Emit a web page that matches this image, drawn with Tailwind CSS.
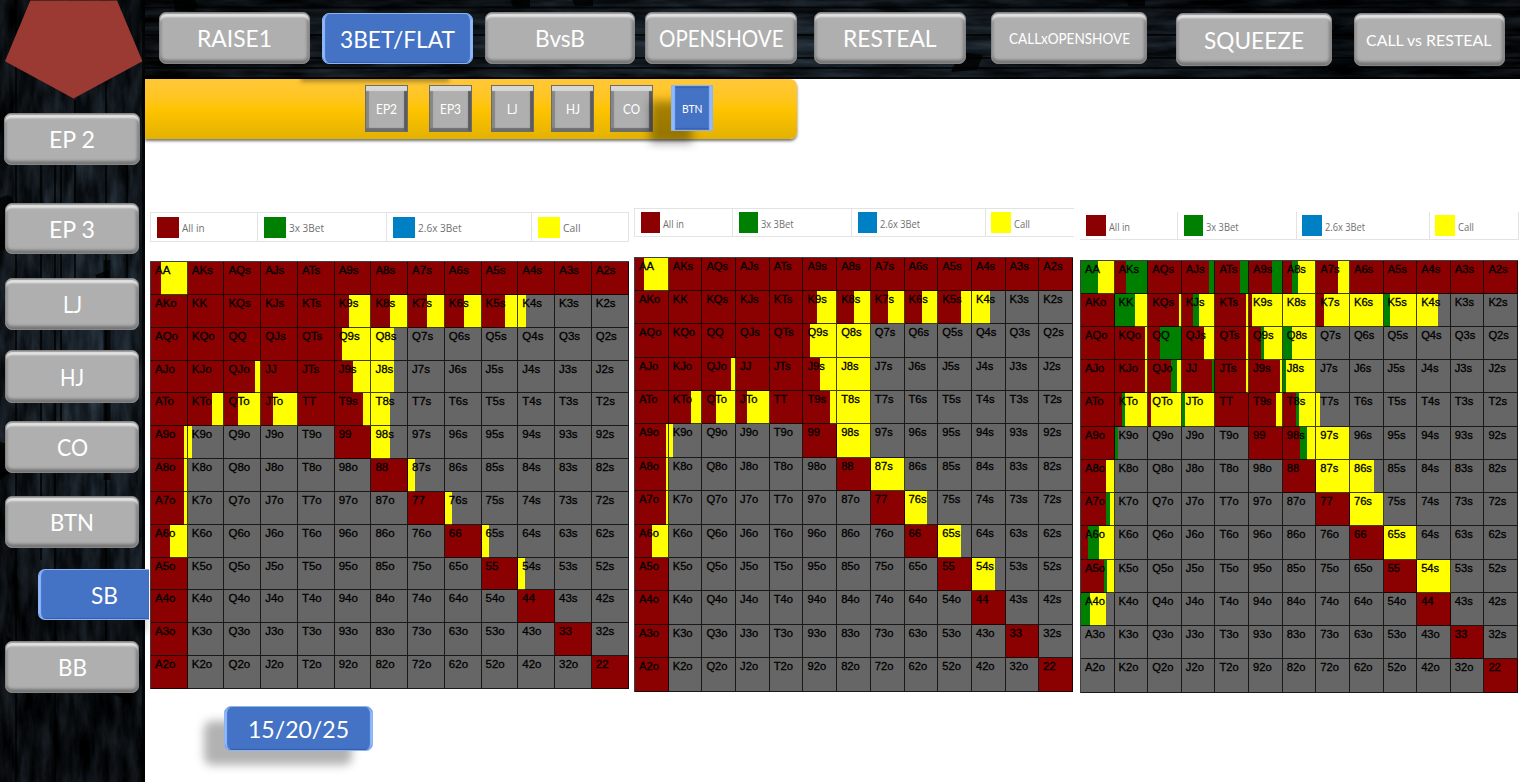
<!DOCTYPE html>
<html lang="en">
<head>
<meta charset="utf-8">
<title>Preflop ranges</title>
<script src="https://cdn.jsdelivr.net/npm/@tailwindcss/browser@4"></script>
</head>
<body class="h-[782px] w-[1520px] overflow-hidden bg-white font-['Lato',sans-serif] text-white">
<div class="flex h-full w-full">

  <aside class="relative z-10 h-full w-[145px] shrink-0 bg-[#070b0f]">
    <svg class="absolute inset-0" width="145" height="782">
      <filter id="woodV" x="0" y="0" width="100%" height="100%" color-interpolation-filters="sRGB">
        <feTurbulence type="fractalNoise" baseFrequency="0.1 0.022" numOctaves="5" seed="11"/>
        <feColorMatrix values="0.22 0 0 0 -0.065  0.26 0 0 0 -0.067  0.3 0 0 0 -0.072  0 0 0 0 1"/>
      </filter>
      <radialGradient id="vigV" gradientUnits="userSpaceOnUse" cx="0" cy="0" r="1" gradientTransform="translate(92 350) scale(110 330)">
        <stop offset="0" stop-color="#5b7690" stop-opacity=".26"/><stop offset=".6" stop-color="#5b7690" stop-opacity=".05"/><stop offset="1" stop-color="#000" stop-opacity=".25"/>
      </radialGradient>
      <rect width="145" height="782" filter="url(#woodV)"/>
      <rect width="145" height="782" fill="url(#vigV)"/>
      <g stroke="#000" stroke-opacity=".75">
        <path d="M16 0V782M41 150V560M55 160V782M61 150V430M75 100V300M106 80V640M127 150V300" stroke-width="2"/>
        <path d="M107 260V480" stroke-width="7"/>
        <path d="M143.500 0V782" stroke-width="3"/>
      </g>
      <path d="M0 198Q14 190 14 206V250H0ZM95 275L109 270V282L98 281ZM0 442L13 445V470L0 480ZM6 635L20 645 40 655V660L8 662ZM108 675L128 680 127 700 108 692Z" fill="#000" fill-opacity=".8"/>
      <path d="M30.300 .5H117L142.500 61.300L73.500 98.500L5 61.300Z" fill="#9a3a33"/>
    </svg>
    <nav id="side" class="relative flex flex-col pt-[113px]"></nav>
  </aside>

  <div class="flex min-w-0 flex-1 flex-col">
    <header class="relative h-[79px] shrink-0 bg-[#070b0f]">
      <svg class="absolute inset-0" width="1375" height="79">
        <filter id="woodH" x="0" y="0" width="100%" height="100%" color-interpolation-filters="sRGB">
          <feTurbulence type="fractalNoise" baseFrequency="0.018 0.12" numOctaves="5" seed="5"/>
          <feColorMatrix values="0 0.22 0 0 -0.065  0 0.26 0 0 -0.067  0 0.3 0 0 -0.072  0 0 0 0 1"/>
        </filter>
        <radialGradient id="vigH" gradientUnits="userSpaceOnUse" cx="0" cy="0" r="1" gradientTransform="translate(620 48) scale(620 60)">
          <stop offset="0" stop-color="#5b7690" stop-opacity=".26"/><stop offset=".6" stop-color="#5b7690" stop-opacity=".05"/><stop offset="1" stop-color="#000" stop-opacity=".25"/>
        </radialGradient>
        <rect width="1375" height="79" filter="url(#woodH)"/>
        <rect width="1375" height="79" fill="url(#vigH)"/>
        <path d="M0 7.500H1375M0 58H1375M0 68H1375M0 78H1375M0 35H1375" stroke="#000" stroke-opacity=".75" stroke-width="2"/>
        <path d="M28 0H50L53 5 50 11H30ZM366 0H385V7H368ZM427 0H448V6H430ZM815 52L838 55 832 70 806 72ZM980 0H1000V6H984ZM1188 24L1200 26 1190 30Z" fill="#000" fill-opacity=".8"/>
      </svg>
      <nav id="top" class="relative flex items-start pt-3"></nav>
    </header>

    <section class="relative h-[60px] w-[652px] shrink-0 rounded-r-[7px] bg-linear-to-b from-[#ffc738] via-[#ffc400] via-50% to-[#e3b100] shadow-[0_2px_3px_rgba(0,0,0,0.55)]">
      <div class="absolute top-0 left-[150px] h-[8px] w-[160px] overflow-hidden"><div class="-mt-[6px] ml-[6px] h-[9px] w-[148px] bg-black/30 blur-[2px]"></div></div>
      <div id="pos" class="relative flex pt-[6px] pl-[220px]"></div>
    </section>

    <main id="charts" class="flex h-[567px] shrink-0 items-start"></main>

    <footer class="flex pl-[79px]">
      <div id="stack" class="relative"></div>
    </footer>
  </div>
</div>

<script>
const GREY = "border border-[#858585] bg-[#afafaf] shadow-[inset_0_1px_1px_#999,inset_0_5px_2px_-1px_#e4e4e4,inset_-3px_0_3px_-1px_#808080,inset_0_-4px_3px_-1px_#747474,inset_2px_0_2px_#999]";
const BLUE = "border border-[#8db4ee] bg-[#4472c4] shadow-[inset_3px_0_1px_-1px_#8fbaff,inset_-3px_0_1px_-1px_#8fbaff,inset_0_-1px_1px_#345fae]";
const SHAPE = "flex shrink-0 items-center justify-center";

/* A one-line label condensed to w pixels; h is the line height, b the baseline. */
const label = (t, w, cls, h, b) =>
  `<svg width="${w}" height="${h}" class="shrink-0 overflow-visible"><text x="0" y="${b}" textLength="${w}" lengthAdjust="spacingAndGlyphs" xml:space="preserve" class="fill-current ${cls}">${t}</text></svg>`;
const big = (t, w) => label(t, w, "text-[23.500px]", 24, 20.5);
const small = (t, w) => label(t, w, "text-[16px]", 18, 14.500);

/* label, text width, box classes, label size, active */
const tabs = [
  ["RAISE1", 75, "ml-[13.500px] w-[151px] h-[52px]", big],
  ["3BET/FLAT", 115, "ml-[12.500px] mt-[1px] w-[151px] h-[51px]", big, 1],
  ["BvsB", 50, "ml-[12px] w-[150px] h-[52px]", big],
  ["OPENSHOVE", 124.5, "ml-[10px] w-[152px] h-[52px]", big],
  ["RESTEAL", 93.5, "ml-[17px] w-[152px] h-[52px]", big],
  ["CALLxOPENSHOVE", 121, "ml-[25px] w-[156px] h-[52px]", small],
  ["SQUEEZE", 100, "ml-[29px] mt-[1px] w-[156px] h-[53px]", big],
  ["CALL vs RESTEAL", 125.5, "ml-[21.500px] mt-[1px] w-[151px] h-[53px]", small],
];
document.getElementById("top").innerHTML = tabs.map(([t, w, b, f, on]) =>
  `<div class="${SHAPE} rounded-[7px] ${b} ${on ? BLUE : GREY}">${f(t, w)}</div>`).join("");

const side = [
  ["EP 2", 46, "ml-1 w-[135.500px] h-[52px]"],
  ["EP 3", 46, "ml-[5px] mt-[38px] w-[134px] h-[51px]"],
  ["LJ", 19, "ml-[5px] mt-[24px] w-[134px] h-[52px]"],
  ["HJ", 24, "ml-[5px] mt-[20px] w-[134px] h-[53px]"],
  ["CO", 31, "ml-[5px] mt-[18px] w-[134px] h-[52px]"],
  ["BTN", 44, "ml-[5px] mt-[23px] w-[134px] h-[52px]"],
  ["SB", 27, "", 1],
  ["BB", 29, "ml-[5px] mt-[21px] w-[134px] h-[52px]"],
];
document.getElementById("side").innerHTML = side.map(([t, w, b, on]) => on
  ? `<div class="${SHAPE} ml-[38px] mt-[21px] h-[51px] w-[111px] rounded-l-[7px] border border-r-0 border-[#8db4ee] bg-[#4472c4] pl-[21px] shadow-[inset_3px_0_1px_-1px_#8fbaff,inset_0_-1px_1px_#345fae,-3px_13px_9px_-1px_rgba(0,0,0,0.3)]">${big(t, w)}</div>`
  : `<div class="${SHAPE} rounded-[7px] ${b} ${GREY}">${big(t, w)}</div>`).join("");

const SG = "border border-[#6c6c6c] bg-[#afafaf] shadow-[inset_0_6px_1px_-1px_#d8d8d8,inset_-4px_0_1px_-1px_#5c5c5c,inset_0_-4px_1px_-1px_#6e6e6e,inset_4px_0_1px_-1px_#868686]";
const pos = [
  ["EP2", 21, "w-[43px]"], ["EP3", 21, "ml-[21px] w-[43px]"], ["LJ", 10.5, "ml-[19px] w-[43px]"],
  ["HJ", 14, "ml-[17px] w-[43px]"], ["CO", 17, "ml-4 w-[43px]"],
];
document.getElementById("pos").innerHTML = pos.map(([t, w, b]) =>
  `<div class="${SHAPE} h-[47px] ${b} ${SG}">${label(t, w, "text-[13px]", 14, 11.500)}</div>`).join("") +
  `<div class="relative ml-[18px]"><div class="absolute top-[16px] -left-[21px] h-[42px] w-[42px] bg-black/35 blur-[5px]"></div>
   <div class="${SHAPE} relative h-[46px] w-[42px] border border-[#8db4ee] bg-[#4472c4] shadow-[inset_3px_0_1px_#8fbaff,inset_-3px_0_1px_#8fbaff,inset_0_3px_1px_-1px_#3763b4,inset_0_-3px_1px_-1px_#3763b4]">${label("BTN", 20.5, "text-[11.500px]", 12, 10.500)}</div></div>`;

document.getElementById("stack").innerHTML =
  `<div class="absolute top-[15px] -left-[20px] h-[44px] w-[148px] rounded-lg bg-black/30 blur-[5px]"></div>
   <div class="${SHAPE} relative h-[45px] w-[149px] rounded-[7px] ${BLUE}">${label("15/20/25", 101, "text-[22.500px]", 24, 20.5)}</div>`;

/* Range charts. Each cell: colour code + end percentage; whatever remains is fold. */
const COL = { r: "#8b0000", g: "#008000", y: "#ffff00", f: "#666666" };
const RANKS = "AKQJT98765432";
const parse = s => Object.fromEntries(s.trim().split(/\s+/).map(e => { const [k, v] = e.split(":"); return [k, v || "r100"]; }));
const PAIRS = "TT 99 88 77 66 55 44 33 22 ";
const CORE = PAIRS + "AKs AQs AJs ATs A9s A8s A7s A6s A5s A4s A3s A2s AKo AQo AJo ATo A5o A4o A3o A2o KK KQs KJs KTs KQo QQ QJs QTs KJo JJ JTs ";
const charts = [
  { box: "mt-[72px] ml-[5px] w-[479px]", grid: "mt-[19px] h-[428px] w-[478.500px] text-[11.500px]",
    lg: "h-[31px] w-[479px] pt-[1px]", line: "border-y",
    it: [["w-[107px] pl-[6px]", 22.5], ["w-[129px] pl-[6px]", 35], ["w-[145px] pl-[6px]", 43.5], ["w-[98px] pl-[6px]", 17.500]], sw: "w-[21.500px]",
    d: CORE + "AA:r27,y100 A9o:r90,y100 A8o:r90,y100 A7o:r90,y100 A6o:r52,y100 K9s:r39,y100 K8s:r51,y100 K7s:r50,y100 K6s:r51,y100 K5s:r65,y100 K4s:y21 Q9s:r20,y100 Q8s:y61 QJo:r84,y100 J9s:r50,y100 J8s:y61 KTo:r66,y100 QTo:r39,y100 JTo:r33,y100 T9s:r79,y100 T8s:y51 K9o:y11 98s:y51 87s:y20 76s:y20 65s:y20 54s:y20" },
  { box: "mt-[68px] ml-[5px] w-[440px]", grid: "mt-[19.500px] h-[435px] w-[439px] text-[11.200px]",
    lg: "h-[30px] w-[440px] pt-[1px]", line: "border-y",
    it: [["w-[98px] pl-[5.500px]", 21], ["w-[119px] pl-[5.500px]", 32.500], ["w-[133.500px] pl-[5.500px]", 40], ["w-[89.500px] pl-[5.500px] last:border-r-0", 16]], sw: "w-[19.500px]",
    d: CORE + "AA:r27,y100 A9o:r90,y100 A8o:r90,y100 A7o:r90,y100 A6o:r51,y100 K9s:r40,y100 K8s:r51,y100 K7s:r50,y100 K6s:r51,y100 K5s:r67,y100 K4s:y52 Q9s:r21,y100 Q8s:y100 QJo:r84,y100 J9s:r51,y100 J8s:y100 KTo:r66,y100 QTo:r40,y100 JTo:r33,y100 T9s:r80,y100 T8s:y100 K9o:y11 98s:y100 87s:y100 76s:y67 65s:y67 54s:y67" },
  { box: "mt-[73px] ml-[6px] w-[439px]", grid: "mt-[19.500px] h-[433px] w-[438px] text-[11.200px]",
    lg: "h-[28px] w-[439px]", line: "border-b",
    it: [["w-[97px] pl-[6px] border-l-0", 21], ["w-[118.500px] pl-[5.500px]", 32.500], ["w-[133px] pl-[5.500px]", 40], ["w-[90px] pl-[5.500px]", 16]], sw: "w-[19.500px]",
    d: PAIRS + "AA:g51,y100 AKs:r34,g100 AQs AJs:r81,g100 ATs:r75,g100 A9s:r67,g100 A8s:r26,g45,y100 A7s:r66,y100 A6s A5s A4s A3s A2s AKo KK:g60,y100 KQs:r90,y100 KJs:r34,g53,y100 KTs:r91,y100 K9s:r10,y100 K8s:y100 K7s:r25,y100 K6s:y100 K5s:g19,y100 K4s:y62 AQo KQo:r90,y100 QQ:r34,g100 QJs:r66,y100 QTs:r91,y100 Q9s:r34,g44,y100 Q8s:g26,y100 AJo KJo:r90,y100 QJo:r67,g86,y100 JJ:r90,g100 JTs:r91,y100 J9s:r90,y100 J8s:g10,y100 ATo KTo:r22,g30,y100 QTo:r10,y100 JTo:g10,y100 T9s:r80,y100 T8s:r40,g50,y100 T7s:y11 A9o K9o:g10 98s:r51,g74,y100 97s:y100 A8o:r75,y100 87s:y100 86s:y70 A7o:r75,g84,y100 76s:y100 A6o:r20,g53,y100 65s:y100 A5o:r68,g77,y100 54s:y100 A4o:g25,y74" },
];
function fill(spec) {
  let at = 0; const out = [];
  for (const p of (spec || "").split(",").filter(Boolean)) {
    const end = +p.slice(1);
    out.push(`${COL[p[0]]} ${at}% ${end}%`); at = end;
  }
  if (at < 100) out.push(`${COL.f} ${at}% 100%`);
  return `linear-gradient(90deg,${out.join(",")})`;
}
const LEG = [["All in", "bg-[#8b0000]"], ["3x 3Bet", "bg-[#008000]"], ["2.6x 3Bet", "bg-[#0080c4]"], ["Call", "bg-[#ffff00]"]];
document.getElementById("charts").innerHTML = charts.map(c => {
  const m = parse(c.d); let cells = "";
  for (let i = 0; i < 13; i++) for (let j = 0; j < 13; j++) {
    const k = i === j ? RANKS[i] + RANKS[i] : i < j ? RANKS[i] + RANKS[j] + "s" : RANKS[j] + RANKS[i] + "o";
    cells += `<div class="min-h-0 border-r border-b border-black/75 bg-origin-border pt-[3px] pl-[4px] leading-[11px]" style="background-image:${fill(m[k])}">${k}</div>`;
  }
  const legend = LEG.map(([t, bg], n) =>
    `<div class="flex h-full items-center border-l border-[#e3e3e3] last:border-r ${c.it[n][0]}"><div class="h-[21px] shrink-0 ${c.sw} ${bg}"></div><div class="ml-[3px]">${label(t, c.it[n][1], "text-[11.500px]", 12, 10.500)}</div></div>`).join("");
  return `<div class="shrink-0 ${c.box}">
    <div class="${c.lg}"><div class="flex h-full ${c.line} border-[#e3e3e3] font-['Open_Sans',sans-serif] text-[#707070]">${legend}</div></div>
    <div class="grid grid-cols-13 grid-rows-13 border-t border-l border-black/75 font-['Liberation_Sans',sans-serif] text-black [-webkit-text-stroke:0.3px_black] ${c.grid}">${cells}</div>
  </div>`;
}).join("");
</script>
</body>
</html>
